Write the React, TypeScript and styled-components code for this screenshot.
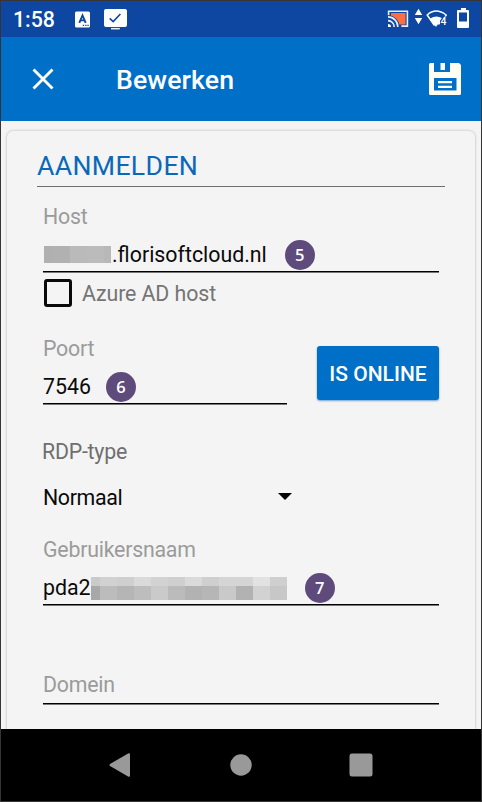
import React from "react";
import styled, { createGlobalStyle } from "styled-components";

const Global = createGlobalStyle`
  *, *::before, *::after { box-sizing: border-box; }
  body { margin: 0; background: #f4f4f4; }
  button { font-family: inherit; }
`;

const Screen = styled.div`
  width: 482px;
  height: 802px;
  border: 1px solid #353535;
  display: flex;
  flex-direction: column;
  background: #f4f4f4;
  font-family: Roboto, "Liberation Sans", sans-serif;
  font-size: 21.33px;
  line-height: 25px;
  overflow: hidden;
`;

const StatusBar = styled.header`
  flex: none;
  height: 36px;
  padding: 0 11px 0 12px;
  display: flex;
  align-items: center;
  background: #0d47a1;
  color: #fff;
`;

const Clock = styled.span`
  width: 61px;
  font-size: 21.33px;
  font-weight: 500;
  padding-top: 1px;
`;

const StatusIcons = styled.div<{ $end?: boolean }>`
  display: flex;
  margin-left: ${(p) => (p.$end ? "auto" : "0")};
  svg { display: block; }
`;

const AppBar = styled.div`
  flex: none;
  height: 84px;
  padding: 0 20px 0 29px;
  display: flex;
  align-items: center;
  background: #006fc7;
  color: #fff;
`;

const IconButton = styled.button`
  border: 0;
  padding: 0;
  background: none;
  display: flex;
  color: inherit;
`;

const Title = styled.h1`
  flex: 1;
  margin: 0 0 0 60px;
  font-size: 26.67px;
  line-height: 31px;
  font-weight: 500;
  padding-top: 2px;
  letter-spacing: 0.1px;
`;

const Content = styled.main`
  flex: 1;
  min-height: 0;
  padding: 10px 6px 0;
  overflow: hidden;
`;

const Card = styled.section`
  height: 640px;
  padding: 19px 30px 0;
  border-radius: 6px;
  background: #f4f4f4;
  box-shadow: 0 0 3px rgba(0, 0, 0, 0.26), 0 1px 2px rgba(0, 0, 0, 0.06);
`;

const SectionTitle = styled.h2`
  margin: 0;
  height: 37px;
  padding-top: 1px;
  border-bottom: 1px solid #6e6e6e;
  color: #0b68b8;
  font-size: 26.67px;
  line-height: 31px;
  font-weight: 400;
  letter-spacing: 0.33px;
`;

const Form = styled.div`
  padding: 17px 6px 0;
`;

const Field = styled.div<{ $width?: number; $top?: number }>`
  width: ${(p) => (p.$width ? `${p.$width}px` : "100%")};
  margin-top: ${(p) => p.$top ?? 0}px;
`;

const Label = styled.label<{ $dark?: boolean; $height?: number }>`
  display: block;
  height: ${(p) => p.$height ?? 38}px;
  margin-left: ${(p) => (p.$dark ? -1 : 0)}px;
  letter-spacing: -0.22px;
  color: ${(p) => (p.$dark ? "#6f6f6f" : "#9b9b9b")};
`;

const Input = styled.div<{ $height?: number; $hint?: boolean }>`
  height: ${(p) => p.$height ?? 31}px;
  display: flex;
  border-bottom: 1px solid #000;
  box-shadow: 0 1px 0 #777;
  letter-spacing: ${(p) => (p.$hint ? "-0.22px" : "normal")};
  color: ${(p) => (p.$hint ? "#9b9b9b" : "#0a0a0a")};
`;

const Marker = styled.span<{ $gap: number }>`
  flex: none;
  width: 30px;
  height: 30px;
  margin: -2px 0 0 ${(p) => p.$gap}px;
  border-radius: 50%;
  background: #5e4a7b;
  color: #fff;
  font-family: "Open Sans", sans-serif;
  font-size: 16.5px;
  font-weight: 600;
  line-height: 29px;
  text-align: center;
`;

const Mosaic = styled.span<{ $columns: string; $rows: string; $top: number; $after?: number; $before?: number }>`
  display: grid;
  margin: ${(p) => p.$top}px ${(p) => p.$after ?? 0}px 0 ${(p) => p.$before ?? 0}px;
  align-self: flex-start;
  grid-template-columns: ${(p) => p.$columns};
  grid-template-rows: ${(p) => p.$rows};
`;

const Tile = styled.i<{ $tone: string }>`
  background: ${(p) => p.$tone};
`;

const CheckRow = styled.div`
  height: 42px;
  padding: 0 0 0 1px;
  display: flex;
  align-items: center;
  color: #757575;
  letter-spacing: -0.08px;
`;

const Box = styled.span`
  width: 28px;
  height: 28px;
  margin: 0 10px 0 0;
  border: 3px solid #0a0a0a;
  border-radius: 3px;
`;

const PortRow = styled.div`
  display: flex;
  justify-content: space-between;
  margin-top: 22px;
`;

const OnlineButton = styled.button`
  width: 122px;
  height: 54px;
  margin-top: 10px;
  padding: 2px 0 0;
  border: 0;
  border-radius: 3px;
  background: #006fc7;
  color: #fff;
  font-size: 21px;
  font-weight: 500;
  white-space: nowrap;
  box-shadow: 0 1px 2px rgba(0, 100, 190, 0.55);
`;

const Select = styled.div`
  width: 249px;
  display: flex;
  justify-content: space-between;
  color: #0a0a0a;
  letter-spacing: -0.35px;
  svg { margin-top: 8px; }
`;

const NavBar = styled.nav`
  flex: none;
  height: 72px;
  display: flex;
  justify-content: center;
  align-items: center;
  gap: 97px;
  background: #000;
`;

const hostTones = ["#b0b0b0", "#b1b1b1", "#bababa", "#bbbbbb", "#b8b8b8"];
const userTones = [
  "#cacaca", "#d1d1d1", "#cfcfcf", "#dadada", "#d2d2d2", "#cfcfcf",
  "#dadada", "#cfcfcf", "#d5d5d5", "#d5d5d5", "#e2e2e2", "#cfcfcf",
  "#a8a8a8", "#bcbcbc", "#b5b5b5", "#bdbdbd", "#cacaca", "#bbbbbb",
  "#b2b2b2", "#b6b6b6", "#c9c9c9", "#b2b2b2", "#d2d2d2", "#c7c7c7",
];

export default function App() {
  return (
    <>
      <Global />
      <Screen>
        <StatusBar>
          <Clock>1:58</Clock>
          <StatusIcons>
            <svg width="54" height="24" viewBox="74 7 54 24">
              <rect x="75" y="11.5" width="15" height="16" rx="1.5" fill="#fff" />
              <path d="M79.3 22.8 82.5 15.3 85.7 22.8M80.6 20.4h3.8" fill="none" stroke="#0d47a1" strokeWidth="1.9" />
              <path d="M82.8 25.4h1.3M85.2 25.4h1.3M87.4 25.4h1.3" stroke="#0d47a1" strokeWidth="1.3" />
              <rect x="104" y="9" width="23" height="18" rx="2" fill="#fff" />
              <path d="m109.7 18.3 3.5 3.3 7.2-7.6" fill="none" stroke="#0d47a1" strokeWidth="1.6" />
              <path d="M111 28.7h8.8" stroke="#e3f2ff" strokeWidth="1.5" />
            </svg>
          </StatusIcons>
          <StatusIcons $end>
            <svg width="84" height="24" viewBox="386 7 84 24">
              <path d="M391 13h14.500v11.500H399c-.5-4-4-7-8-7.400z" fill="#ff6e40" />
              <path d="M388.600 15.500v-4.300h18.800v14.900h-6" fill="none" stroke="#e8f1ff" strokeWidth="1.600" />
              <path d="M388 16.900a9.800 9.800 0 0 1 9.800 10M388 20.600a6.200 6.200 0 0 1 6.200 6.300" fill="none" stroke="#0d47a1" strokeWidth="3.400" />
              <path d="M388 16.900a9.800 9.800 0 0 1 9.800 10M388 20.600a6.200 6.200 0 0 1 6.200 6.300" fill="none" stroke="#e8f1ff" strokeWidth="1.600" />
              <path d="M388 24.100a3 3 0 0 1 3 3h-3z" fill="#fff" />
              <path d="m418.500 8.700 3.700 6.300h-7.400zM418.500 24.300l3.700-6.300h-7.400z" fill="#fff" />
              <path d="M434.500 25.500 427.200 15q8.500-7.800 19 0l-1.300 2.200" fill="none" stroke="#fff" strokeWidth="1.500" strokeLinejoin="round" />
              <path d="M430 18.700q6-4.200 11.800-.8L440 20.700v3.500l-2.600.5-1.400 2.300z" fill="#fff" />
              <text x="440.500" y="24.700" fontSize="10.500" fontWeight="500" fill="#fff" stroke="#0d47a1" strokeWidth="1" paintOrder="stroke">4</text>
              <path d="M461 8h5v2h-5z" fill="#fff" />
              <path fillRule="evenodd" d="M458 10h10a1 1 0 0 1 1 1v16a1 1 0 0 1-1 1h-10a1 1 0 0 1-1-1V11a1 1 0 0 1 1-1zm1 2.500V21.500h8v-9z" fill="#fff" />
            </svg>
          </StatusIcons>
        </StatusBar>

        <AppBar>
          <IconButton aria-label="Sluiten">
            <svg width="26" height="26" viewBox="30 66 26 26">
              <path d="m33.500 69.500 19 19m0-19-19 19" fill="none" stroke="#fffff2" strokeWidth="2.900" />
            </svg>
          </IconButton>
          <Title>Bewerken</Title>
          <IconButton aria-label="Opslaan">
            <svg width="32" height="32" viewBox="0 0 32 32">
              <path
                fillRule="evenodd"
                fill="#fffff2"
                d="M1.500 0H5v9h16V0h9l2 2v28.500a1.500 1.500 0 0 1-1.500 1.500h-29A1.500 1.500 0 0 1 0 30.500v-29A1.500 1.500 0 0 1 1.500 0zM5 15v12.500h22.500V15z"
              />
              <path d="M11.500 0h4.500v7h-4.500zM9 18h14v2.200H9zM9 22.800h14V25H9z" fill="#fffff2" />
            </svg>
          </IconButton>
        </AppBar>

        <Content>
          <Card>
            <SectionTitle>AANMELDEN</SectionTitle>
            <Form>
              <Field>
                <Label>Host</Label>
                <Input $height={30}>
                  <Mosaic $columns="9px 17px 17px 17px 7px" $rows="17px" $top={4} $before={1} $after={1}>
                    {hostTones.map((tone, i) => <Tile key={i} $tone={tone} />)}
                  </Mosaic>
                  <span>.florisoftcloud.nl</span>
                  <Marker $gap={18}>5</Marker>
                </Input>
              </Field>
              <CheckRow>
                <Box />
                <span>Azure AD host</span>
              </CheckRow>
              <PortRow>
                <Field $width={244}>
                  <Label>Poort</Label>
                  <Input $height={30}>
                    <span>7546</span>
                    <Marker $gap={15}>6</Marker>
                  </Input>
                </Field>
                <OnlineButton>IS ONLINE</OnlineButton>
              </PortRow>
              <Field $top={35}>
                <Label $dark $height={46}>RDP-type</Label>
                <Select>
                  <span>Normaal</span>
                  <svg width="14" height="7" viewBox="0 0 14 7"><path d="M0 0h14L7 7z" fill="#000" /></svg>
                </Select>
              </Field>
              <Field $top={27}>
                <Label>Gebruikersnaam</Label>
                <Input $height={30}>
                  <span>pda2</span>
                  <Mosaic $columns="9px repeat(11, 17px)" $rows="9px 14px" $top={2}>
                    {userTones.map((tone, i) => <Tile key={i} $tone={tone} />)}
                  </Mosaic>
                  <Marker $gap={18}>7</Marker>
                </Input>
              </Field>
              <Field $top={67}>
                <Input $height={32} $hint>Domein</Input>
              </Field>
            </Form>
          </Card>
        </Content>

        <NavBar>
          <svg width="22" height="24" viewBox="0 0 22 24"><path d="M1 11 19.500.3Q21 0 21 1.300v21.400Q21 24 19.500 23.700L1 13Q0 12 1 11z" fill="#999" /></svg>
          <svg width="24" height="22" viewBox="0 0 24 22"><circle cx="13" cy="11" r="10.700" fill="#999" /></svg>
          <svg width="24" height="24" viewBox="0 0 24 24"><rect x=".5" y=".5" width="23" height="23" rx="2.500" fill="#999" /></svg>
        </NavBar>
      </Screen>
    </>
  );
}
